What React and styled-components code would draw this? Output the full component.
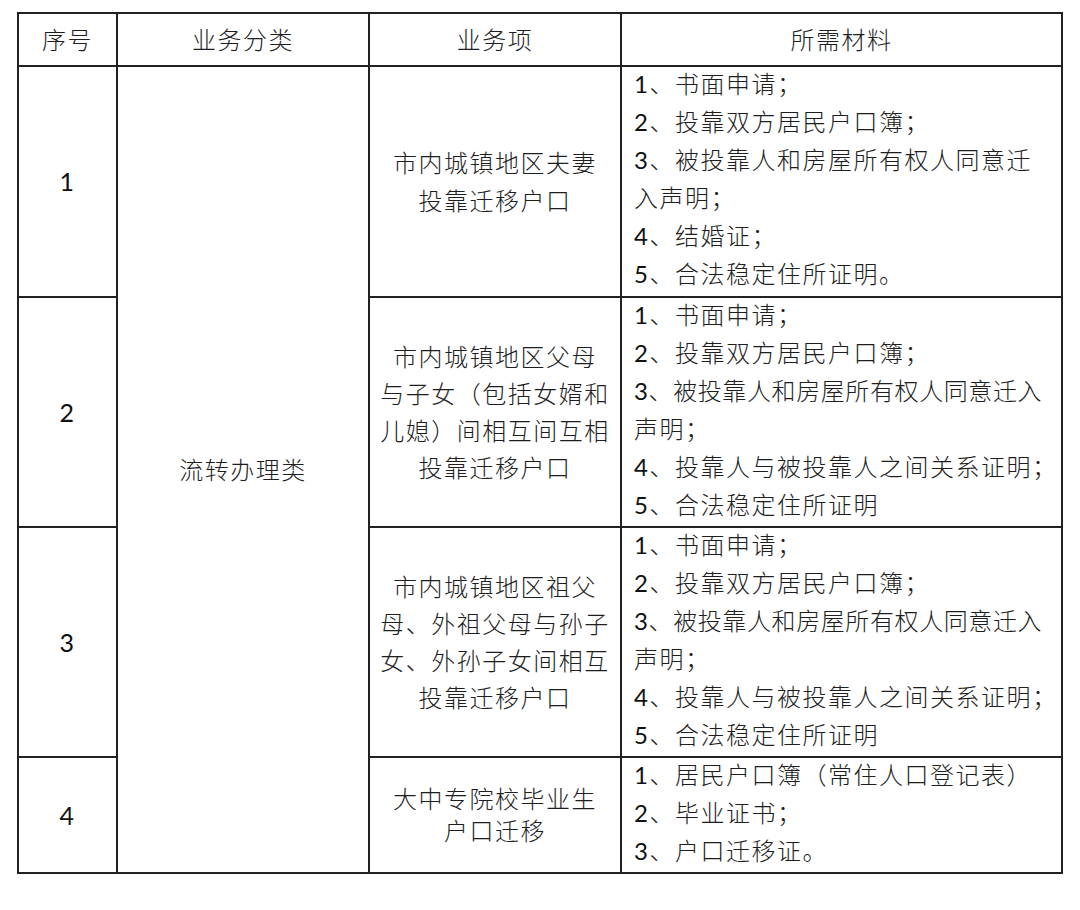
import styled, { createGlobalStyle } from "styled-components";

const GlobalStyle = createGlobalStyle`
  html, body {
    margin: 0;
    padding: 0;
    background: #ffffff;
  }
  body {
    font-family: "Lato", "Noto Sans CJK SC", sans-serif;
    color: #1e1e1e;
  }
`;

const Page = styled.div`
  width: 1080px;
  height: 910px;
  padding: 12px 0 0 17px;
  box-sizing: border-box;
  background: #fff;
`;

const Table = styled.table`
  border-collapse: collapse;
  table-layout: fixed;
  width: 1044px;
  border: 2px solid #222;
  font-size: 24px;
  font-weight: 300;
  letter-spacing: 1.5px;
`;

const Col = styled.col`
  width: ${({ $w }) => $w}px;
`;

const HeadRow = styled.tr`
  height: 53px;
`;

const BodyRow = styled.tr`
  height: ${({ $h }) => $h}px;
`;

const HeadCell = styled.th`
  border: 2px solid #222;
  font-weight: 300;
  text-align: center;
  vertical-align: middle;
  padding: 0;
  line-height: 30px;
`;

const Cell = styled.td`
  border: 2px solid #222;
  padding: ${({ $list }) => ($list ? "0 0 0 12px" : "0")};
  text-align: ${({ $list }) => ($list ? "left" : "center")};
  vertical-align: ${({ $list }) => ($list ? "top" : "middle")};
  line-height: ${({ $lh }) => $lh || 38}px;
`;

const Line = styled.div`
  white-space: nowrap;
  margin-top: ${({ $first }) => ($first ? "-2px" : "0")};
  letter-spacing: ${({ $tight }) => ($tight ? "0.6px" : "inherit")};
`;

const Num = styled.span`
  font-weight: 400;
  font-size: ${({ $big }) => ($big ? "25px" : "24px")};
  color: #111;
`;

const rows = [
  {
    no: "1",
    height: 231,
    item: ["市内城镇地区夫妻", "投靠迁移户口"],
    itemLh: 38,
    materials: [
      "1、书面申请；",
      "2、投靠双方居民户口簿；",
      "3、被投靠人和房屋所有权人同意迁",
      "入声明；",
      "4、结婚证；",
      "5、合法稳定住所证明。",
    ],
  },
  {
    no: "2",
    height: 230,
    item: ["市内城镇地区父母", "与子女（包括女婿和", "儿媳）间相互间互相", "投靠迁移户口"],
    itemLh: 37,
    materials: [
      "1、书面申请；",
      "2、投靠双方居民户口簿；",
      { text: "3、被投靠人和房屋所有权人同意迁入", tight: true },
      "声明；",
      "4、投靠人与被投靠人之间关系证明；",
      "5、合法稳定住所证明",
    ],
  },
  {
    no: "3",
    height: 230,
    item: ["市内城镇地区祖父", "母、外祖父母与孙子", "女、外孙子女间相互", "投靠迁移户口"],
    itemLh: 37,
    materials: [
      "1、书面申请；",
      "2、投靠双方居民户口簿；",
      { text: "3、被投靠人和房屋所有权人同意迁入", tight: true },
      "声明；",
      "4、投靠人与被投靠人之间关系证明；",
      "5、合法稳定住所证明",
    ],
  },
  {
    no: "4",
    height: 116,
    item: ["大中专院校毕业生", "户口迁移"],
    itemLh: 32,
    materials: ["1、居民户口簿（常住人口登记表）", "2、毕业证书；", "3、户口迁移证。"],
  },
];

const MaterialLine = ({ text, tight, first }) => {
  const match = text.match(/^(\d)(.*)$/);
  return (
    <Line $tight={tight} $first={first}>
      {match ? (
        <>
          <Num>{match[1]}</Num>
          {match[2]}
        </>
      ) : (
        text
      )}
    </Line>
  );
};

export default function App() {
  return (
    <Page>
      <GlobalStyle />
      <Table>
        <colgroup>
          <Col $w={99} />
          <Col $w={252} />
          <Col $w={252} />
          <Col $w={441} />
        </colgroup>
        <thead>
          <HeadRow>
            <HeadCell>序号</HeadCell>
            <HeadCell>业务分类</HeadCell>
            <HeadCell>业务项</HeadCell>
            <HeadCell>所需材料</HeadCell>
          </HeadRow>
        </thead>
        <tbody>
          {rows.map((row, i) => (
            <BodyRow key={row.no} $h={row.height}>
              <Cell>
                <Num $big>{row.no}</Num>
              </Cell>
              {i === 0 && <Cell rowSpan={rows.length}>流转办理类</Cell>}
              <Cell $lh={row.itemLh}>
                {row.item.map((t) => (
                  <Line key={t}>{t}</Line>
                ))}
              </Cell>
              <Cell $list>
                {row.materials.map((m, j) => {
                  const text = typeof m === "string" ? m : m.text;
                  return (
                    <MaterialLine
                      key={text}
                      text={text}
                      tight={typeof m !== "string"}
                      first={j === 0}
                    />
                  );
                })}
              </Cell>
            </BodyRow>
          ))}
        </tbody>
      </Table>
    </Page>
  );
}
